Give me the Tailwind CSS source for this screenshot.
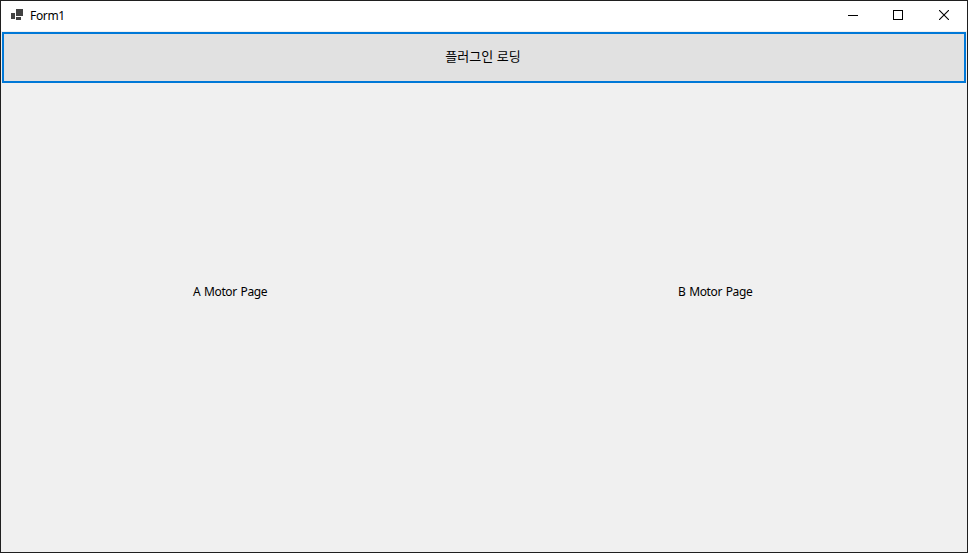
<!DOCTYPE html>
<html lang="ko"><head><meta charset="utf-8"><title>Form1</title>
<script src="https://cdn.jsdelivr.net/npm/@tailwindcss/browser@4"></script></head>
<body class="h-[553px] w-[968px] overflow-hidden">
<div class="flex h-full w-full flex-col border border-[#1f1f1f] bg-[#f0f0f0] text-[12px] leading-4 text-black font-['Noto_Sans','Noto_Sans_CJK_KR',sans-serif]">
<header class="flex h-[30px] shrink-0 items-center bg-white pl-[9px]">
<svg class="h-[14px] w-[14px]" viewBox="0 0 14 14" shape-rendering="crispEdges" fill="#424242"><path d="M6 0h7v7H6zM1 4h4v6H1zM6 8h5v3H6z"/></svg>
<span class="ml-[6px] tracking-[-0.35px]">Form1</span>
<div class="ml-auto flex h-full pb-[2px]">
<button class="flex w-[46px] items-center justify-center" aria-label="Minimize"><svg width="10" height="10" shape-rendering="crispEdges"><path d="M0 5.5h10" stroke="#000"/></svg></button>
<button class="flex w-[44px] items-center justify-center" aria-label="Maximize"><svg width="10" height="10" shape-rendering="crispEdges"><path d="M.5 .5h9v9h-9z" fill="none" stroke="#000"/></svg></button>
<button class="flex w-[47px] items-center justify-center pl-px" aria-label="Close"><svg width="10" height="10"><path d="M0 0l10 10M10 0L0 10" stroke="#000" stroke-width="1.1"/></svg></button>
</div></header>
<button class="mx-px mt-px h-[51px] shrink-0 border-2 border-[#0078d7] bg-[#e1e1e1] pr-[2px] pb-[3px] text-[13px] font-['Noto_Sans_CJK_KR',sans-serif]">플러그인 로딩</button>
<main class="grid flex-1 grid-cols-2 tracking-[-0.38px] [word-spacing:1px]"><div class="pl-[192px] pt-[201px]">A Motor Page</div><div class="pl-[194px] pt-[201px]">B Motor Page</div></main>
</div></body></html>
